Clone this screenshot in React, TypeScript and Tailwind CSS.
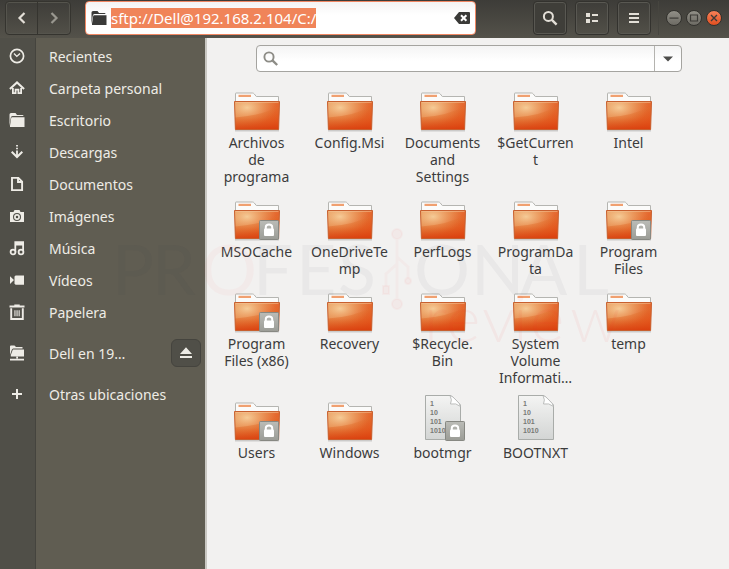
import { useEffect, useRef, useState } from 'react';
import type { ReactNode } from 'react';

interface Place { name: string; icon: ReactNode; gap?: boolean; eject?: boolean; }
interface Entry { name: string; kind: 'folder' | 'file'; locked?: boolean; }

const Icon = ({ children, className = '' }: { children: ReactNode; className?: string }) => (
  <svg viewBox="0 0 16 16" className={`w-4 h-4 shrink-0 ${className}`} fill="currentColor" aria-hidden="true">{children}</svg>
);

const folderGlyph = (
  <>
    <path d="M.5 14V2.5Q.5 1 2 1H6.5L8 3H13.5Q14.5 3 14.5 4H3.5Q2 4 1.8 5.5Z" />
    <path d="M3 5.2H15.5V15H1V13.8L2.2 6Q2.3 5.2 3 5.2Z" />
  </>
);

const places: Place[] = [
  { name: 'Recientes', icon: <><circle cx="8" cy="8" r="6.6" fill="none" stroke="currentColor" strokeWidth="1.7" /><path d="M5 5.6 7.8 8.4 11 5.4" fill="none" stroke="currentColor" strokeWidth="1.4" /></> },
  { name: 'Carpeta personal', icon: <><path d="M.9 9 8 2.4 15.1 9" fill="none" stroke="currentColor" strokeWidth="2" /><path d="M3.9 8V13.1H6.6V9.6H9.4V13.1H12.1V8" fill="none" stroke="currentColor" strokeWidth="1.8" /></> },
  { name: 'Escritorio', icon: folderGlyph },
  { name: 'Descargas', icon: <><path d="M7.1 1h1.8v1.6H7.1zM7.1 3.7h1.8v1.6H7.1zM7.1 6.4h1.8V12H7.1z" /><path d="M2.7 7.8 8 13l5.3-5.2" fill="none" stroke="currentColor" strokeWidth="2" /></> },
  { name: 'Documentos', icon: <path d="M3 1.9h6.4L13.1 5.6V14.1H3Z M9 2v4h4" fill="none" stroke="currentColor" strokeWidth="1.9" /> },
  { name: 'Imágenes', icon: <><path fillRule="evenodd" d="M5.5 2h5l1 2H15v10H1V4h3.5ZM8 5a4 4 0 1 0 0 8 4 4 0 0 0 0-8Z" /><circle cx="8" cy="9" r="2.1" fill="none" stroke="currentColor" strokeWidth="1.7" /></> },
  { name: 'Música', icon: <><path d="M5.4 1.2H15V12.5H13.2V5.4H7.2V12.5H5.4Z" /><circle cx="4" cy="12" r="2.4" fill="#504f48" stroke="currentColor" strokeWidth="1.8" /><circle cx="12" cy="12" r="2.4" fill="#504f48" stroke="currentColor" strokeWidth="1.8" /></> },
  { name: 'Vídeos', icon: <path d="M1 4.2 5 8 1 12Z M5.5 4.4 6.6 3.5H15V12.7H6.6L5.5 11.8Z" /> },
  { name: 'Papelera', icon: <><path d="M.5 1.6h4.8V.4h5.4v1.2h4.8v2H.5Z" /><path d="M2.2 4.2V15H13.8V4.2" fill="none" stroke="currentColor" strokeWidth="1.9" /><path d="M5.4 6.2h1.1v6H5.4zM7.5 6.2h1.1v6H7.5zM9.6 6.2h1.1v6H9.6z" /></> },
  { name: 'Dell en 19…', gap: true, eject: true, icon: <><path d="M1 10V1.4Q1 .5 2 .5H5.5L7 2h6.5v1.4H4.3Q3 3.4 2.7 5Z" /><path d="M3.9 4.4H15V11.5H1.8V10Z" /><path d="M7.2 11.5h1.8v2.1H7.2zM1 13.8h14v1.8H1z" /></> },
  { name: 'Otras ubicaciones', gap: true, icon: <path d="M7 3h2v4h4v2H9v4H7V9H3V7h4Z" /> },
];

// line breaks are the ones the icon view ellipsizes and wraps at
const entries: Entry[] = [
  { name: 'Archivos\nde\nprograma', kind: 'folder' },
  { name: 'Config.Msi', kind: 'folder' },
  { name: 'Documents\nand\nSettings', kind: 'folder' },
  { name: '$GetCurren\nt', kind: 'folder' },
  { name: 'Intel', kind: 'folder' },
  { name: 'MSOCache', kind: 'folder', locked: true },
  { name: 'OneDriveTe\nmp', kind: 'folder' },
  { name: 'PerfLogs', kind: 'folder' },
  { name: 'ProgramDa\nta', kind: 'folder' },
  { name: 'Program\nFiles', kind: 'folder', locked: true },
  { name: 'Program\nFiles (x86)', kind: 'folder', locked: true },
  { name: 'Recovery', kind: 'folder' },
  { name: '$Recycle.\nBin', kind: 'folder' },
  { name: 'System\nVolume\nInformati…', kind: 'folder' },
  { name: 'temp', kind: 'folder' },
  { name: 'Users', kind: 'folder', locked: true },
  { name: 'Windows', kind: 'folder' },
  { name: 'bootmgr', kind: 'file', locked: true },
  { name: 'BOOTNXT', kind: 'file' },
];

function Defs() {
  return (
    <svg className="absolute w-0 h-0" aria-hidden="true">
      <defs>
        <linearGradient id="body" x1="0" y1="0" x2="1" y2=".7">
          <stop offset="0" stopColor="#e59a5c" /><stop offset=".5" stopColor="#e4793c" /><stop offset="1" stopColor="#e64e1a" />
        </linearGradient>
        <radialGradient id="glow" cx=".28" cy=".22" r=".65">
          <stop offset="0" stopColor="#f7d3a0" stopOpacity=".9" /><stop offset="1" stopColor="#f0a060" stopOpacity="0" />
        </radialGradient>
        <linearGradient id="low" x1="0" y1="0" x2="0" y2="1">
          <stop offset="0" stopColor="#dd7c34" stopOpacity=".25" /><stop offset=".5" stopColor="#e0601e" stopOpacity=".4" /><stop offset="1" stopColor="#d83c0c" stopOpacity=".85" />
        </linearGradient>
        <linearGradient id="paper" x1="0" y1="0" x2="0" y2="1">
          <stop offset="0" stopColor="#f4f4f3" /><stop offset="1" stopColor="#d3d5d4" />
        </linearGradient>
        <linearGradient id="emblem" x1="0" y1="0" x2="0" y2="1">
          <stop offset="0" stopColor="#bbbcb7" /><stop offset="1" stopColor="#9b9c96" />
        </linearGradient>
      </defs>
    </svg>
  );
}

function FolderArt() {
  return (
    <>
      <path d="M2 46.8h44" stroke="#000" strokeOpacity=".16" strokeWidth="1.6" />
      <path d="M2.5 20V9.5Q2.5 9 3 9H19.5Q20.5 9 21.3 10L23.3 12.5H45.5V20Z" fill="#fbfbfa" stroke="#b5b5b1" />
      <path d="M5.5 10.8H18V13H5.5Z" fill="#f0a070" />
      <path d="M1.5 17.5H46.5L45.6 45.5H2.4Z" fill="url(#body)" />
      <path d="M1.5 17.5H46.5L45.6 45.5H2.4Z" fill="url(#glow)" />
      <path d="M1.9 33.5Q28 32 46.3 22L45.6 45.5H2.4Z" fill="url(#low)" />
      <path d="M1.5 17.5H46.5L45.6 45.5H2.4Z" fill="none" stroke="#c8602f" />
      <path d="M2.5 18.5H45.5" stroke="#f6c59a" strokeOpacity=".5" />
    </>
  );
}

function FileArt() {
  return (
    <>
      <path d="M6.5 1.5H32L41.5 11V45.5H6.5Z" fill="url(#paper)" stroke="#a9aca9" />
      <path d="M31 1.5Q33.5 6 31.5 10Q37 8.6 41.5 12.5Q41 9.5 37 6Q33.5 2 31 1.5Z" fill="#fff" stroke="#aeb0ae" strokeWidth=".8" />
      <g fill="#777976" fontFamily="Liberation Sans, sans-serif" fontWeight="700" fontSize="7">
        <text x="11" y="12">1</text>
        <text x="11" y="21">10</text>
        <text x="11" y="30">101</text>
        <text x="11" y="39">1010</text>
      </g>
    </>
  );
}

function EntryIcon({ kind, locked }: { kind: Entry['kind']; locked?: boolean }) {
  return (
    <svg viewBox="0 0 48 48" className="w-12 h-12" aria-hidden="true">
      {kind === 'folder' ? <FolderArt /> : <FileArt />}
      {locked && (
        <>
          <rect x="26.5" y="27.5" width="19" height="19" rx=".8" fill="url(#emblem)" stroke="#878882" />
          <path d="M32.8 36.5V34Q32.8 31.5 36 31.5T39.2 34V36.5" fill="none" stroke="#fff" strokeWidth="2" />
          <rect x="31" y="35.5" width="10" height="7.5" rx="1" fill="#fff" />
        </>
      )}
    </svg>
  );
}

function Watermark() {
  return (
    <svg viewBox="0 0 530 150" className="absolute left-[110px] top-[210px] w-[530px] h-[150px] pointer-events-none" aria-hidden="true" fontFamily="Lato, sans-serif">
      <g fontSize="70" fill="#2a3440" fillOpacity=".045">
        <text y="85" x="2 42">PR</text>
        <text y="85" x="91" fill="#ff3030" fillOpacity=".035">O</text>
        <text y="85" x="143 186 228">FES</text>
        <text y="85" x="304 361 410 463">ONAL</text>
      </g>
      <g fill="#ff3030" fillOpacity=".04" stroke="#ff3030" strokeOpacity=".035" strokeWidth="2">
        <circle cx="287" cy="24" r="5" />
        <circle cx="287" cy="94" r="5" />
        <path d="M287 30V88M287 54 276 64V76M287 47 298 57V68" fill="none" strokeWidth="3" />
        <rect x="273" y="76" width="6" height="8" />
        <circle cx="298" cy="71" r="3" />
      </g>
      <text y="132" x="314 336 372 403 420 460" fontSize="66" fontWeight="300" fill="#ff3030" fillOpacity=".05">review</text>
    </svg>
  );
}

const headBtn = 'w-[34px] h-[34px] flex items-center justify-center rounded border border-[#33322e] text-[#e3dfd7] shadow-[inset_0_0_0_1px_#595852]';
const winBtn = 'w-4 h-4 rounded-full flex items-center justify-center text-[#3c3b37] border border-[#33322e]';

function HeaderBar() {
  const [path, setPath] = useState('sftp://Dell@192.168.2.104/C:/');
  const ref = useRef<HTMLInputElement>(null);

  useEffect(() => { ref.current?.focus(); ref.current?.select(); }, []);

  return (
    <header className="h-[38px] flex items-start pt-px pl-[5px] pr-[7px] bg-linear-to-b from-[#3d3c38] to-[#54524a]">
      <nav className="flex h-[34px] rounded border border-[#35342f] shadow-[inset_0_0_0_1px_#55544d]">
        <button aria-label="Atrás" className="w-8 flex items-center justify-center text-[#e3dfd7] border-r border-[#35342f]">
          <Icon><path d="M10.5 3 5.5 8l5 5" fill="none" stroke="currentColor" strokeWidth="2.2" /></Icon>
        </button>
        <button aria-label="Adelante" className="w-8 flex items-center justify-center text-[#99978f]">
          <Icon><path d="M5.5 3l5 5-5 5" fill="none" stroke="currentColor" strokeWidth="2.2" /></Icon>
        </button>
      </nav>
      <div className="flex-1 min-w-0 ml-[14px] mr-[57px] h-[34px] flex items-center px-[5px] gap-1 rounded border border-[#f08763] bg-linear-to-b from-[#f4f4f4] to-white to-40% text-[#3a3a38]">
        <Icon>{folderGlyph}</Icon>
        <input ref={ref} aria-label="Ubicación" value={path} onChange={e => setPath(e.target.value)}
          className="flex-1 min-w-0 h-6 bg-transparent outline-none text-[15px] selection:bg-[rgba(240,131,87,0.99)] selection:text-white" />
        <button aria-label="Borrar" onClick={() => setPath('')}>
          <Icon><path fillRule="evenodd" d="M0 8 5 2H15Q16 2 16 3V13Q16 14 15 14H5ZM6.3 6 8.3 8 6.3 10 7.7 11.4 9.7 9.4 11.7 11.4 13.1 10 11.1 8 13.1 6 11.7 4.6 9.7 6.6 7.7 4.6Z" /></Icon>
        </button>
      </div>
      <div className="flex gap-2">
        <button aria-label="Buscar" className={`${headBtn} bg-[#3f3e39]`}>
          <Icon><circle cx="6.4" cy="6.4" r="4.5" fill="none" stroke="currentColor" strokeWidth="2" /><path d="M9.6 9.6 14.6 14.6" stroke="currentColor" strokeWidth="2.4" /></Icon>
        </button>
        <button aria-label="Vista" className={headBtn}>
          <Icon><path d="M2 3h4v4H2zM2 9h4v4H2zM8 4h6v2H8zM8 10h6v2H8z" /></Icon>
        </button>
        <button aria-label="Menú" className={headBtn}>
          <Icon><path d="M3 3h10v2H3zM3 7h10v2H3zM3 11h10v2H3z" /></Icon>
        </button>
      </div>
      <div className="flex items-center gap-1 h-[34px] ml-[7px] pl-[7px] border-l border-[#46453f]">
        <button aria-label="Minimizar" className={`${winBtn} bg-linear-to-b from-[#918f87] to-[#6d6b64]`}>
          <Icon><path d="M3.5 7.5h9v1.2h-9z" /></Icon>
        </button>
        <button aria-label="Maximizar" className={`${winBtn} bg-linear-to-b from-[#918f87] to-[#6d6b64]`}>
          <Icon><path d="M4.5 5h7v6h-7z" fill="none" stroke="currentColor" strokeWidth="1.2" /></Icon>
        </button>
        <button aria-label="Cerrar" className={`${winBtn} bg-linear-to-b from-[#f58057] to-[#e24f1e]`}>
          <Icon><path d="M5 5l6 6M11 5l-6 6" stroke="currentColor" strokeWidth="1.4" /></Icon>
        </button>
      </div>
    </header>
  );
}

function Sidebar() {
  return (
    <aside className="w-[207px] shrink-0 border-r-2 border-[#c9c7c2] pt-[2px] text-[#eeece6] bg-[linear-gradient(to_right,#504f48_35px,#45443e_35px,#45443e_36px,#605d52_36px)]">
      <ul>
        {places.map(p => (
          <li key={p.name} className={`h-8 flex items-center ${p.gap ? 'mt-[9px]' : ''}`}>
            <button className="flex-1 flex items-center h-full pl-[9px] gap-6 text-left">
              <Icon>{p.icon}</Icon>
              <span>{p.name}</span>
            </button>
            {p.eject && (
              <button aria-label="Expulsar" className="w-[30px] h-7 mr-1 flex items-center justify-center rounded-md bg-[#504f48] border border-[#45443e]">
                <Icon><path d="M8 2.3 14 9H2ZM2 11h12v2H2z" /></Icon>
              </button>
            )}
          </li>
        ))}
      </ul>
    </aside>
  );
}

export default function App() {
  const [query, setQuery] = useState('');

  return (
    <div className="relative min-h-screen flex flex-col bg-[#f2f1f0] text-[14px] leading-[17px] font-['Noto_Sans',sans-serif]">
      <Defs />
      <HeaderBar />
      <div className="flex-1 flex">
        <Sidebar />
        <main className="flex-1 min-w-0">
          <div className="mt-[7px] ml-[49px] mr-[47px] h-[27px] flex rounded border border-[#a5a4a0] bg-linear-to-b from-[#f4f4f4] to-white to-60%">
            <label className="flex-1 flex items-center gap-1 pl-[6px] text-[#8d8c86]">
              <Icon><circle cx="6" cy="6" r="4.6" fill="none" stroke="currentColor" strokeWidth="1.9" /><path d="M9.4 9.4 14.2 14" stroke="currentColor" strokeWidth="2.4" /></Icon>
              <input type="search" aria-label="Buscar archivos" value={query} onChange={e => setQuery(e.target.value)}
                className="flex-1 min-w-0 bg-transparent outline-none text-[#3c3c3c]" />
            </label>
            <button aria-label="Filtros" className="w-[27px] flex items-center justify-center border-l border-[#b4b3af] text-[#4c4c4a]">
              <Icon><path d="M3 5.5h10L8 10.6Z" /></Icon>
            </button>
          </div>
          <ul className="mt-3 pl-[3px] grid grid-cols-[repeat(auto-fill,93px)] gap-y-2 text-[#3c3c3c]">
            {entries.map(e => (
              <li key={e.name} className="flex flex-col items-center gap-[2px]">
                <EntryIcon kind={e.kind} locked={e.locked} />
                <span className="text-center whitespace-pre">{e.name}</span>
              </li>
            ))}
          </ul>
        </main>
      </div>
      <Watermark />
    </div>
  );
}
